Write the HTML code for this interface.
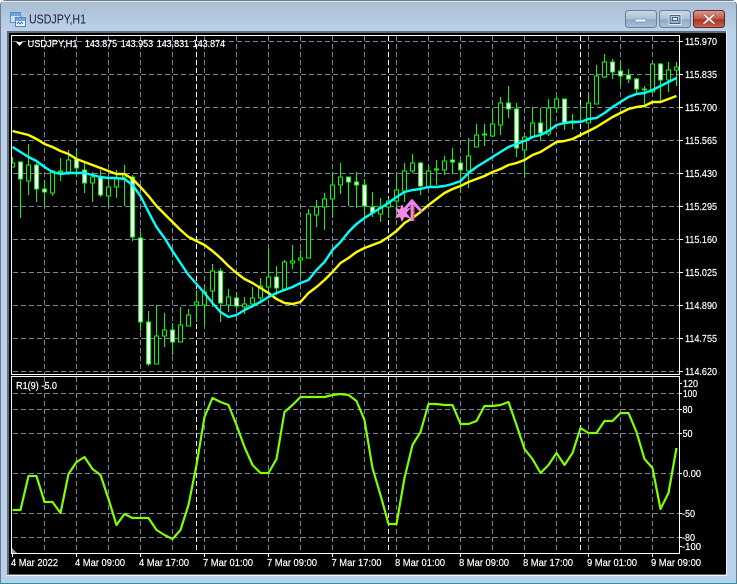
<!DOCTYPE html>
<html><head><meta charset="utf-8"><title>USDJPY,H1</title>
<style>
html,body{margin:0;padding:0;background:#fff}
#w{position:relative;width:737px;height:584px;overflow:hidden;background:#fff}
svg{position:absolute;left:0;top:0;display:block}
text{font-family:"Liberation Sans",sans-serif;font-size:10.5px;fill:#fff;stroke:#fff;stroke-width:.2}
</style></head><body><div id="w">
<svg width="737" height="584" viewBox="0 0 737 584" xmlns="http://www.w3.org/2000/svg">
<defs>
<linearGradient id="tb" x1="0" y1="0" x2="0" y2="1"><stop offset="0" stop-color="#a8bdd0"/><stop offset="1" stop-color="#bcd3ea"/></linearGradient>
<linearGradient id="bt" x1="0" y1="0" x2="0" y2="1"><stop offset="0" stop-color="#cbd9e6"/><stop offset=".5" stop-color="#a9bfd4"/><stop offset=".55" stop-color="#8eaac4"/><stop offset="1" stop-color="#a9c4dc"/></linearGradient>
<linearGradient id="cl" x1="0" y1="0" x2="0" y2="1"><stop offset="0" stop-color="#dc9a8e"/><stop offset=".5" stop-color="#c0554a"/><stop offset=".55" stop-color="#a92f22"/><stop offset="1" stop-color="#c86a52"/></linearGradient>
<clipPath id="m"><rect x="12" y="36" width="667" height="338"/></clipPath>
<clipPath id="i"><rect x="12" y="377" width="667" height="176"/></clipPath>
</defs>
<!-- window frame -->
<rect x="0.5" y="0.5" width="736" height="590" rx="5" fill="#b9d1ea" stroke="#6f7c88"/>
<rect x="1" y="1" width="735" height="31" rx="4" fill="url(#tb)"/>
<rect x="1" y="1" width="735" height="1" fill="#dfe8f0"/>
<rect x="0" y="583" width="737" height="1" fill="#1b9aa6"/>
<rect x="7" y="31" width="720" height="545" fill="#f2f5f8"/>
<rect x="7" y="31" width="719" height="544" fill="#5f6b78"/>
<rect x="9" y="33" width="717" height="541" fill="#000"/>
<!-- title icon -->
<g shape-rendering="crispEdges">
<rect x="10.500" y="12.500" width="10" height="10" fill="#cfe2f5" stroke="#5c90cf"/>
<rect x="11" y="13" width="9" height="3" fill="#6ea3e0"/>
<rect x="15.500" y="17.500" width="10" height="9" fill="#eef5fc" stroke="#4f86c8"/>
<rect x="16" y="18" width="9" height="3" fill="#6ea3e0"/>
</g>
<path d="M17 24l1.500-2 1.500 2 1.500-2 1.500 2" fill="none" stroke="#3c6fb0"/>
<text x="29" y="23.500" style="font-size:12.500px;fill:#1e1a3c;stroke:none" textLength="57" lengthAdjust="spacingAndGlyphs">USDJPY,H1</text>
<!-- buttons -->
<rect x="625.500" y="10.500" width="31" height="17" rx="3" fill="url(#bt)" stroke="#6c7f92"/>
<rect x="659.500" y="10.500" width="31" height="17" rx="3" fill="url(#bt)" stroke="#6c7f92"/>
<rect x="693.500" y="10.500" width="31" height="17" rx="3" fill="url(#cl)" stroke="#5c2a2a"/>
<rect x="635" y="19" width="11" height="3" fill="#e8eef4" stroke="#5f7184" stroke-width=".5"/>
<rect x="670" y="15.500" width="10" height="8" fill="none" stroke="#4f6275" stroke-width="1"/>
<rect x="669" y="14.500" width="12" height="10" fill="none" stroke="#e4ebf2" stroke-width="1"/>
<rect x="672.500" y="17.500" width="5" height="3" fill="#dfe7ef" stroke="#4f6275" stroke-width="1"/>
<path d="M705 14l4 3.500 4-3.500h3l-5 5 5 5h-3l-4-3.500-4 3.500h-3l5-5-5-5z" fill="#f0e8e4" stroke="#7d3a30" stroke-width=".5"/>
<!-- grid -->
<g clip-path="url(#m)" fill="none" stroke="#778899" stroke-dasharray="5 3" shape-rendering="crispEdges">
<path d="M13 41.500H679M13 74.500H679M13 107.500H679M13 140.500H679M13 173.500H679M13 206.500H679M13 239.500H679M13 272.500H679M13 305.500H679M13 338.500H679M13 371.500H679"/>
<path d="M44.500 36V374M76.500 36V374M108.500 36V374M140.500 36V374M172.500 36V374M204.500 36V374M236.500 36V374M268.500 36V374M300.500 36V374M332.500 36V374M364.500 36V374M396.500 36V374M428.500 36V374M460.500 36V374M492.500 36V374M524.500 36V374M556.500 36V374M588.500 36V374M620.500 36V374M652.500 36V374"/>
<path stroke="#fff" d="M196.500 36V374M388.500 36V374M580.500 36V374"/>
</g>
<g clip-path="url(#i)" fill="none" stroke="#778899" stroke-dasharray="5 3" shape-rendering="crispEdges">
<path d="M13 393.500H679M13 409.500H679M13 433.500H679M13 473.500H679M13 513.500H679M13 537.500H679"/>
<path d="M44.500 377V553M76.500 377V553M108.500 377V553M140.500 377V553M172.500 377V553M204.500 377V553M236.500 377V553M268.500 377V553M300.500 377V553M332.500 377V553M364.500 377V553M396.500 377V553M428.500 377V553M460.500 377V553M492.500 377V553M524.500 377V553M556.500 377V553M588.500 377V553M620.500 377V553M652.500 377V553"/>
<path stroke="#fff" d="M196.500 377V553M388.500 377V553M580.500 377V553"/>
</g>
<!-- candles -->
<g clip-path="url(#m)" stroke="#00ff00" shape-rendering="crispEdges">
<path fill="none" d="M12.500 157V167M20.500 161V218M28.500 144V195M36.500 163V202M44.500 180V205M52.500 170V196M60.500 158V181M68.500 150V175M76.500 148V177M84.500 163V193M92.500 172V202M100.500 170V197M108.500 179V206M116.500 170V198M124.500 165V206M132.500 175V241M140.500 232V331M148.500 311V366M156.500 305V364M164.500 313V347M172.500 323V355M180.500 307V342M188.500 309V326M196.500 290V322M204.500 285V326M212.500 264V307M220.500 268V322M228.500 289V312M236.500 292V309M244.500 297V314M252.500 287V308M260.500 278V302M268.500 248V295M276.500 266V295M284.500 260V290M292.500 245V269M300.500 250V277M308.500 209V258M316.500 200V227M324.500 193V230M332.500 173V218M340.500 163V194M348.500 177V206M356.500 172V208M364.500 179V217M372.500 192V217M380.500 198V222M388.500 198V218M396.500 175V215M404.500 163V202M412.500 154V173M420.500 162V195M428.500 165V187M436.500 160V185M444.500 156V175M452.500 148V174M460.500 160V193M468.500 138V188M476.500 124V147M484.500 124V146M492.500 108V137M500.500 97V135M508.500 86V118M516.500 103V157M524.500 135V178M532.500 107V138M540.500 108V141M548.500 99V136M556.500 96V113M564.500 99V130M572.500 114V129M580.500 105V123M588.500 93V123M596.500 65V104M604.500 54V78M612.500 59V79M620.500 62V86M628.500 69V83M636.500 78V93M644.500 86V107M652.500 64V92M660.500 63V102M668.500 62V92M676.500 62V86"/>
<path fill="#000" d="M10.500 163h4V167h-4zM26.500 165h4V181h-4zM50.500 171h4V193h-4zM58.500 171h4V172h-4zM66.500 160h4V172h-4zM90.500 177h4V183h-4zM106.500 187h4V196h-4zM114.500 179h4V187h-4zM122.500 175h4V177h-4zM154.500 336h4V364h-4zM162.500 330h4V336h-4zM178.500 325h4V342h-4zM186.500 315h4V326h-4zM194.500 302h4V305h-4zM202.500 292h4V305h-4zM210.500 271h4V291h-4zM226.500 297h4V305h-4zM242.500 304h4V307h-4zM250.500 298h4V304h-4zM258.500 286h4V298h-4zM266.500 277h4V287h-4zM282.500 262h4V289h-4zM290.500 261h4V263h-4zM298.500 258h4V260h-4zM306.500 214h4V258h-4zM314.500 207h4V215h-4zM322.500 199h4V207h-4zM330.500 185h4V199h-4zM338.500 177h4V185h-4zM378.500 207h4V214h-4zM386.500 201h4V207h-4zM394.500 190h4V201h-4zM402.500 171h4V191h-4zM410.500 163h4V171h-4zM426.500 171h4V187h-4zM434.500 169h4V170h-4zM442.500 161h4V170h-4zM466.500 156h4V171h-4zM474.500 135h4V147h-4zM482.500 134h4V135h-4zM490.500 124h4V136h-4zM498.500 103h4V125h-4zM522.500 137h4V150h-4zM530.500 123h4V137h-4zM546.500 108h4V134h-4zM554.500 99h4V108h-4zM570.500 121h4V123h-4zM578.500 121h4V122h-4zM586.500 103h4V123h-4zM594.500 76h4V104h-4zM602.500 62h4V77h-4zM642.500 89h4V90h-4zM650.500 64h4V92h-4zM666.500 70h4V80h-4zM674.500 67h4V70h-4z"/>
<path fill="#fff" d="M18.500 162h4V179h-4zM34.500 165h4V189h-4zM42.500 189h4V192h-4zM74.500 159h4V168h-4zM82.500 170h4V183h-4zM98.500 178h4V195h-4zM130.500 177h4V237h-4zM138.500 238h4V322h-4zM146.500 322h4V364h-4zM170.500 330h4V342h-4zM218.500 271h4V303h-4zM234.500 298h4V306h-4zM274.500 277h4V288h-4zM346.500 177h4V182h-4zM354.500 182h4V185h-4zM362.500 185h4V206h-4zM370.500 207h4V213h-4zM418.500 163h4V186h-4zM450.500 160h4V162h-4zM458.500 163h4V170h-4zM506.500 103h4V109h-4zM514.500 109h4V148h-4zM538.500 123h4V133h-4zM562.500 99h4V123h-4zM610.500 62h4V72h-4zM618.500 71h4V76h-4zM626.500 75h4V79h-4zM634.500 79h4V89h-4zM658.500 64h4V80h-4z"/>
</g>
<!-- moving averages -->
<g clip-path="url(#m)" fill="none" stroke-width="2.400" stroke-linejoin="round">
<polyline stroke="#ffff00" points="12.500,131 20.500,133 28.500,135 36.500,139 44.500,144 52.500,147 60.500,151 68.500,154 76.500,159 84.500,162 92.500,165 100.500,168 108.500,171 116.500,174 124.500,174 132.500,179 140.500,187 148.500,196 156.500,206 164.500,214 172.500,222 180.500,230 188.500,237 196.500,241 204.500,245 212.500,251 220.500,258 228.500,266 236.500,273 244.500,279 252.500,283 260.500,288 268.500,293 276.500,299 284.500,303 292.500,304 300.500,302 308.500,293 316.500,287 324.500,280 332.500,272 340.500,263 348.500,258 356.500,252 364.500,248 372.500,245 380.500,242 388.500,237 396.500,231 404.500,223 412.500,218 420.500,212 428.500,205 436.500,199 444.500,193 452.500,189 460.500,186 468.500,182 476.500,179 484.500,176 492.500,172 500.500,169 508.500,165 516.500,163 524.500,160 532.500,155 540.500,152 548.500,147 556.500,142 564.500,141 572.500,139 580.500,135 588.500,131 596.500,127 604.500,122 612.500,117 620.500,113 628.500,109 636.500,107 644.500,106 652.500,102 660.500,102 668.500,99 676.500,96"/>
<polyline stroke="#00ffff" points="12.500,147 20.500,152 28.500,157 36.500,161 44.500,167 52.500,172 60.500,174 68.500,173 76.500,173 84.500,173 92.500,175 100.500,177 108.500,178 116.500,178 124.500,179 132.500,185 140.500,196 148.500,212 156.500,227 164.500,238 172.500,251 180.500,263 188.500,275 196.500,284 204.500,293 212.500,303 220.500,312 228.500,317 236.500,315 244.500,310 252.500,306 260.500,302 268.500,297 276.500,293 284.500,290 292.500,287 300.500,283 308.500,280 316.500,270 324.500,262 332.500,250 340.500,242 348.500,232 356.500,224 364.500,218 372.500,213 380.500,208 388.500,203 396.500,197 404.500,192 412.500,190 420.500,189 428.500,187 436.500,187 444.500,186 452.500,184 460.500,181 468.500,173 476.500,167 484.500,162 492.500,157 500.500,152 508.500,147 516.500,144 524.500,141 532.500,137 540.500,135 548.500,131 556.500,125 564.500,123 572.500,122 580.500,122 588.500,119 596.500,118 604.500,113 612.500,107 620.500,102 628.500,97 636.500,94 644.500,93 652.500,90 660.500,86 668.500,82 676.500,78"/>
</g>
<!-- arrow & star -->
<path d="M402 212L412 201L422 212" fill="none" stroke="#ee82ee" stroke-width="3"/>
<path d="M410.500 202h3v19h-3z" fill="#ee82ee"/>
<path d="M413 206h1.500v15h-1.500z" fill="#e0607a"/>
<polygon points="402,204 404.500,209.500 411,207.500 406.500,213 411,218.500 404.500,217 402,222 400,217 395,218.500 398,213 395,207.500 400,209.500" fill="#f48ae6"/>
<!-- R1 line -->
<polyline clip-path="url(#i)" fill="none" stroke="#7fff00" stroke-width="2.200" stroke-linejoin="round" points="12.500,510 20.500,510 28.500,476 36.500,476 44.500,502 52.500,502 60.500,513 68.500,474 76.500,462 84.500,457 92.500,469 100.500,475 108.500,499 116.500,525 124.500,514 132.500,518 140.500,518 148.500,518 156.500,530 164.500,535 172.500,539 180.500,530 188.500,505 196.500,465 204.500,417 212.500,398 220.500,402 228.500,405 236.500,425 244.500,447 252.500,465 260.500,473 268.500,473 276.500,459 284.500,412 292.500,405 300.500,397 308.500,397 316.500,397 324.500,397 332.500,395 340.500,394 348.500,395 356.500,401 364.500,420 372.500,468 380.500,495 388.500,524 396.500,524 404.500,478 412.500,445 420.500,432 428.500,404 436.500,404 444.500,405 452.500,405 460.500,424 468.500,424 476.500,421 484.500,406 492.500,406 500.500,405 508.500,402 516.500,425 524.500,449 532.500,459 540.500,473 548.500,465 556.500,453 564.500,465 572.500,453 580.500,428 588.500,433 596.500,433 604.500,421 612.500,421 620.500,413 628.500,413 636.500,432 644.500,459 652.500,468 660.500,509 668.500,493 676.500,448"/>
<!-- pane borders -->
<g fill="none" stroke="#fff" shape-rendering="crispEdges">
<path d="M11.500 35.500H679.500V374.500H11.500Z"/>
<path d="M11.500 376.500H679.500V553.500H11.500Z"/>
<path d="M680 41.500h3M680 74.500h3M680 107.500h3M680 140.500h3M680 173.500h3M680 206.500h3M680 239.500h3M680 272.500h3M680 305.500h3M680 338.500h3M680 371.500h3M680 383.500h2M680 393.500h2M680 409.500h2M680 433.500h2M680 473.500h2M680 513.500h2M680 537.500h2M680 546.500h2"/>
<path d="M12.500 554v3M76.500 554v3M140.500 554v3M204.500 554v3M268.500 554v3M332.500 554v3M396.500 554v3M460.500 554v3M524.500 554v3M588.500 554v3M652.500 554v3"/>
</g>
<polygon points="12,548 12,553 17,553" fill="#8a9bb0"/>
<polygon points="16,42 23,42 19.500,46" fill="#fff"/>
<!-- header text -->
<text x="27.500" y="47" textLength="50" lengthAdjust="spacingAndGlyphs">USDJPY,H1</text>
<text x="85" y="47" textLength="32" lengthAdjust="spacingAndGlyphs">143.875</text>
<text x="120.700" y="47" textLength="32.500" lengthAdjust="spacingAndGlyphs">143.953</text>
<text x="156.700" y="47" textLength="32.500" lengthAdjust="spacingAndGlyphs">143.831</text>
<text x="192.700" y="47" textLength="32.500" lengthAdjust="spacingAndGlyphs">143.874</text>
<text x="16" y="389" textLength="41" lengthAdjust="spacingAndGlyphs">R1(9) -5.0</text>
<!-- price axis -->
<text x="685" y="45" textLength="32" lengthAdjust="spacingAndGlyphs">115.970</text>
<text x="685" y="78" textLength="32" lengthAdjust="spacingAndGlyphs">115.835</text>
<text x="685" y="111" textLength="32" lengthAdjust="spacingAndGlyphs">115.700</text>
<text x="685" y="144" textLength="32" lengthAdjust="spacingAndGlyphs">115.565</text>
<text x="685" y="177" textLength="32" lengthAdjust="spacingAndGlyphs">115.430</text>
<text x="685" y="210" textLength="32" lengthAdjust="spacingAndGlyphs">115.295</text>
<text x="685" y="243" textLength="32" lengthAdjust="spacingAndGlyphs">115.160</text>
<text x="685" y="276" textLength="32" lengthAdjust="spacingAndGlyphs">115.025</text>
<text x="685" y="309" textLength="32" lengthAdjust="spacingAndGlyphs">114.890</text>
<text x="685" y="342" textLength="32" lengthAdjust="spacingAndGlyphs">114.755</text>
<text x="685" y="375" textLength="32" lengthAdjust="spacingAndGlyphs">114.620</text>
<!-- indicator axis -->
<text x="683" y="387" textLength="15" lengthAdjust="spacingAndGlyphs">120</text>
<text x="683" y="397" textLength="14" lengthAdjust="spacingAndGlyphs">100</text>
<text x="682.500" y="413" textLength="10" lengthAdjust="spacingAndGlyphs">80</text>
<text x="682.500" y="437" textLength="10" lengthAdjust="spacingAndGlyphs">50</text>
<text x="683" y="477" textLength="18" lengthAdjust="spacingAndGlyphs">0.00</text>
<text x="682" y="517" textLength="13" lengthAdjust="spacingAndGlyphs">-50</text>
<text x="682" y="541" textLength="13" lengthAdjust="spacingAndGlyphs">-80</text>
<text x="682" y="550" textLength="19" lengthAdjust="spacingAndGlyphs">-100</text>
<!-- time axis -->
<text x="11" y="566" textLength="47" lengthAdjust="spacingAndGlyphs">4 Mar 2022</text>
<text x="75" y="566" textLength="50" lengthAdjust="spacingAndGlyphs">4 Mar 09:00</text>
<text x="139" y="566" textLength="50" lengthAdjust="spacingAndGlyphs">4 Mar 17:00</text>
<text x="203" y="566" textLength="50" lengthAdjust="spacingAndGlyphs">7 Mar 01:00</text>
<text x="267" y="566" textLength="50" lengthAdjust="spacingAndGlyphs">7 Mar 09:00</text>
<text x="331.500" y="566" textLength="50" lengthAdjust="spacingAndGlyphs">7 Mar 17:00</text>
<text x="395" y="566" textLength="50" lengthAdjust="spacingAndGlyphs">8 Mar 01:00</text>
<text x="459" y="566" textLength="50" lengthAdjust="spacingAndGlyphs">8 Mar 09:00</text>
<text x="523" y="566" textLength="50" lengthAdjust="spacingAndGlyphs">8 Mar 17:00</text>
<text x="587" y="566" textLength="50" lengthAdjust="spacingAndGlyphs">9 Mar 01:00</text>
<text x="651" y="566" textLength="50" lengthAdjust="spacingAndGlyphs">9 Mar 09:00</text>
</svg>
</div></body></html>
